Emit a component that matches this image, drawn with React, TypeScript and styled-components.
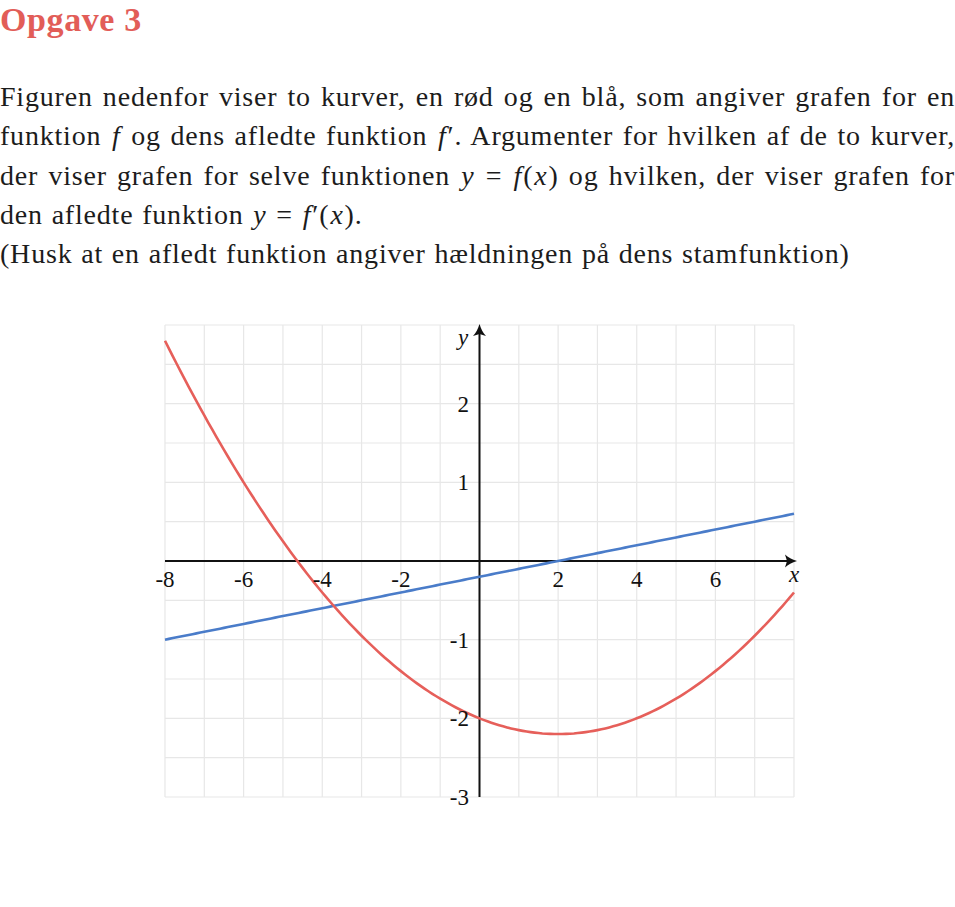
import styled, {createGlobalStyle} from "styled-components";

const GlobalStyle = createGlobalStyle`
    html, body {
        margin: 0;
        padding: 0;
        background: #fff;
    }
    body {
        font-family: "Liberation Serif", "DejaVu Serif", serif;
        color: #1c1c1c;
    }
`

// graph scale: page coordinates of the plotted grid
const X0 = 479.5
const SX = 629 / 16
const Y0 = 562
const SY = 472 / 6
const px = (u: number) => X0 + u * SX
const py = (v: number) => Y0 - v * SY

const f = (x: number) => 0.05 * x * x - 0.2 * x - 2
const df = (x: number) => 0.1 * x - 0.2

const curvePath = (fn: (x: number) => number) => {
    const pts: string[] = []
    for (let x = -8; x <= 8.001; x += 0.1) {
        pts.push(`${px(x).toFixed(2)},${py(fn(x)).toFixed(2)}`)
    }
    return "M" + pts.join(" L")
}

const tickLabel = (t: number) => (t < 0 ? `-${-t}` : `${t}`)

const Graph = () => {
    const verticals = Array.from({length: 17}, (_, i) => px(i - 8))
    const horizontals = Array.from({length: 13}, (_, i) => py(-3 + i * 0.5))
    const xTicks = [-8, -6, -4, -2, 2, 4, 6]
    const yTicks = [2, 1, -1, -2, -3]
    return (
        <GraphSvg width="955" height="540" viewBox="0 300 955 540">
            <g stroke="#e7e7e7" strokeWidth="1.2">
                {verticals.map((x) => <line key={"v" + x} x1={x} y1={py(3)} x2={x} y2={py(-3)}/>)}
                {horizontals.map((y) => <line key={"h" + y} x1={px(-8)} y1={y} x2={px(8)} y2={y}/>)}
            </g>
            <g stroke="#111" strokeWidth="2" fill="none">
                <line x1={px(-8)} y1={Y0} x2={794} y2={Y0}/>
                <line x1={X0} y1={py(-3)} x2={X0} y2={329}/>
            </g>
            <path d="M797,562 C792,560.5 788,558.5 785,555.5 L787,562 L785,568.5 C788,565.5 792,563.5 797,562 Z" fill="#111"/>
            <path d="M479.5,325 C478,330 476,334 473,337 L479.5,335 L486,337 C483,334 481,330 479.5,325 Z" fill="#111"/>
            <path d={curvePath(df)} stroke="#4a7cc9" strokeWidth="2.6" fill="none"/>
            <path d={curvePath(f)} stroke="#e65f5a" strokeWidth="2.6" fill="none"/>
            <g fontFamily="'Liberation Serif', serif" fontSize="23" fill="#111">
                {xTicks.map((t) => (
                    <text key={"x" + t} x={px(t)} y={588} textAnchor="middle">{tickLabel(t)}</text>
                ))}
                {yTicks.map((t) => (
                    <text key={"y" + t} x={469} y={py(t) + 8} textAnchor="end">{tickLabel(t)}</text>
                ))}
                <text x={794} y={583} textAnchor="middle" fontStyle="italic">x</text>
                <text x={463} y={346} textAnchor="middle" fontStyle="italic">y</text>
            </g>
        </GraphSvg>
    )
}

export default function App() {
    return (
        <Page>
            <GlobalStyle/>
            <Title>Opgave 3</Title>
            <Text>
                <Line $justify>Figuren nedenfor viser to kurver, en rød og en blå, som angiver grafen for en</Line>
                <Line $justify>funktion <M>f</M> og dens afledte funktion <M>f</M>′. Argumenter for hvilken af de to kurver,</Line>
                <Line $justify>der viser grafen for selve funktionen <M>y</M> = <M>f</M>(<M>x</M>) og hvilken, der viser grafen for</Line>
                <Line>den afledte funktion <M>y</M> = <M>f</M>′(<M>x</M>).</Line>
                <Line>(Husk at en afledt funktion angiver hældningen på dens stamfunktion)</Line>
            </Text>
            <Graph/>
        </Page>
    )
}

const Page = styled.div`
    width: 955px;
    display: flex;
    flex-direction: column;
`
const Title = styled.h2`
    margin: 0;
    font-size: 34px;
    line-height: 40px;
    letter-spacing: 0.6px;
    font-weight: 700;
    color: #e25d58;
`
const Text = styled.div`
    margin-top: 37px;
    font-size: 28px;
    line-height: 39.3px;
    letter-spacing: 0.8px;
    word-spacing: 1px;
`
const Line = styled.div<{ $justify?: boolean }>`
    white-space: nowrap;
    text-align: ${(p) => (p.$justify ? "justify" : "left")};
    text-align-last: ${(p) => (p.$justify ? "justify" : "left")};
`
const M = styled.span`
    font-style: italic;
    padding: 0 1px;
`
const GraphSvg = styled.svg`
    display: block;
    margin-top: 26px;
`
